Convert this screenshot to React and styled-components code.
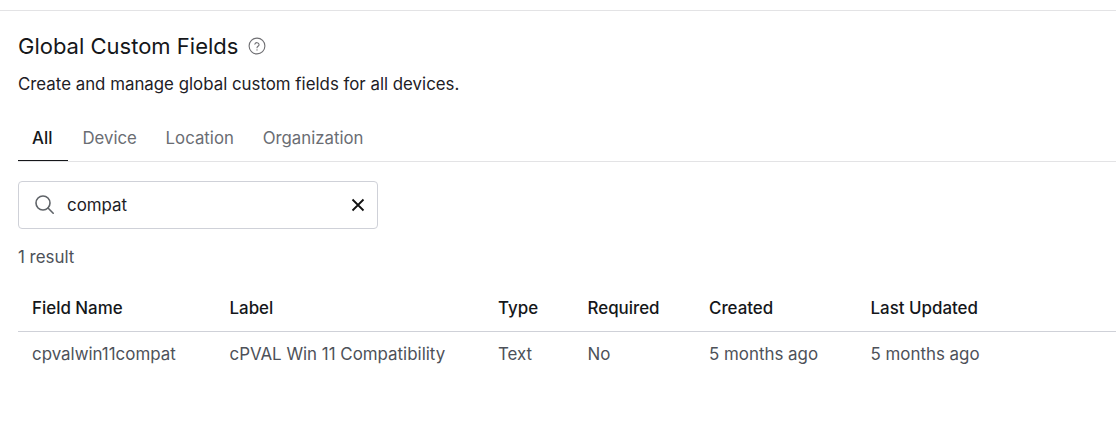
import React from 'react'
import styled, { createGlobalStyle } from 'styled-components'

const columns = [
  { key: 'name', title: 'Field Name' },
  { key: 'label', title: 'Label' },
  { key: 'type', title: 'Type' },
  { key: 'required', title: 'Required' },
  { key: 'created', title: 'Created' },
  { key: 'updated', title: 'Last Updated' },
]

const row = {
  name: 'cpvalwin11compat',
  label: 'cPVAL Win 11 Compatibility',
  type: 'Text',
  required: 'No',
  created: '5 months ago',
  updated: '5 months ago',
}

const tabs = ['All', 'Device', 'Location', 'Organization']

function App() {
  return (
    <>
      <GlobalStyle />
      <Page>
        <TitleRow>
          <Title>Global Custom Fields</Title>
          <HelpIcon width="18" height="18" viewBox="0 0 18 18" fill="none">
            <circle cx="9" cy="9" r="7.9" stroke="#6f6f73" strokeWidth="1.1" />
            <path d="M6.9 7.2a2.15 2.15 0 0 1 4.2.5c0 1.4-2.1 1.7-2.1 3" stroke="#6f6f73" strokeWidth="1.1" strokeLinecap="round" />
            <circle cx="9" cy="12.9" r="0.7" fill="#6f6f73" />
          </HelpIcon>
        </TitleRow>
        <Description>Create and manage global custom fields for all devices.</Description>
        <TabBar>
          {tabs.map((tab, i) => (
            <Tab key={tab} $active={i === 0}>{tab}</Tab>
          ))}
        </TabBar>
        <SearchBox>
          <svg width="24" height="24" viewBox="0 0 24 24" fill="none">
            <circle cx="11" cy="10" r="7" stroke="#5f6368" strokeWidth="1.6" />
            <path d="M16 15l5.200 5.200" stroke="#5f6368" strokeWidth="1.6" strokeLinecap="round" />
          </svg>
          <SearchText>compat</SearchText>
          <svg width="16" height="16" viewBox="0 0 16 16" fill="none">
            <path d="M2.500 2.500l11 11M13.500 2.500l-11 11" stroke="#111" strokeWidth="1.8" />
          </svg>
        </SearchBox>
        <ResultCount>1 result</ResultCount>
        <Table>
          <HeaderRow>
            {columns.map(c => <HeadCell key={c.key}>{c.title}</HeadCell>)}
          </HeaderRow>
          <BodyRow>
            {columns.map(c => <BodyCell key={c.key}>{row[c.key]}</BodyCell>)}
          </BodyRow>
        </Table>
      </Page>
    </>
  )
}

export default App

const GlobalStyle = createGlobalStyle`
body{
  margin:0;
  background:#fff;
  font-family:Inter,"Liberation Sans",sans-serif;
}
`
const Page = styled.div`
width:1116px;
height:435px;
margin-top:10px;
box-sizing:border-box;
border-top:1px solid #e3e3e5;
padding-left:18px;
overflow:hidden;
`
const TitleRow = styled.div`
display:flex;
align-items:center;
column-gap:10px;
margin-top:20px;
height:30px;
`
const Title = styled.h1`
margin:0;
font-size:22px;
line-height:30px;
font-weight:400;
color:#15171a;
`
const HelpIcon = styled.svg`
display:block;
`
const Description = styled.p`
margin:11px 0 0;
font-size:16.850px;
line-height:24px;
color:#1d2025;
`
const TabBar = styled.div`
display:flex;
margin-top:20px;
height:45px;
border-bottom:1px solid #e3e3e5;
`
const Tab = styled.div`
padding:0 14.400px;
font-size:16.800px;
line-height:45px;
font-weight:${p => (p.$active ? 500 : 400)};
color:${p => (p.$active ? '#15171a' : '#6a6d73')};
height:45px;
box-sizing:border-box;
${p => p.$active && 'border-bottom:1px solid #15171a;padding:0 0 0 14px;width:50px;'}
`
const SearchBox = styled.div`
display:flex;
align-items:center;
box-sizing:border-box;
width:360px;
height:48px;
margin-top:19px;
padding:0 11px 0 13px;
border:1px solid #cfd1d8;
border-radius:4px;
column-gap:11px;
`
const SearchText = styled.div`
flex:1;
font-size:16.900px;
color:#1d2025;
`
const ResultCount = styled.div`
margin-top:18px;
font-size:16.900px;
line-height:20px;
color:#4d5159;
`
const Table = styled.div`
display:grid;
grid-template-columns:197.500px 268.500px 89.500px 121.500px 161.500px 1fr;
margin-top:19px;
`
const HeaderRow = styled.div`
display:grid;
grid-template-columns:subgrid;
grid-column:1 / -1;
height:46px;
align-items:center;
border-bottom:1px solid #cfd1d8;
box-sizing:border-box;
`
const BodyRow = styled.div`
display:grid;
grid-template-columns:subgrid;
grid-column:1 / -1;
height:46px;
align-items:center;
`
const HeadCell = styled.div`
padding:0 0 2px 14px;
font-size:16.900px;
font-weight:500;
color:#15171a;
`
const BodyCell = styled.div`
padding:0 0 2px 14px;
font-size:16.900px;
color:#4d5159;
`
